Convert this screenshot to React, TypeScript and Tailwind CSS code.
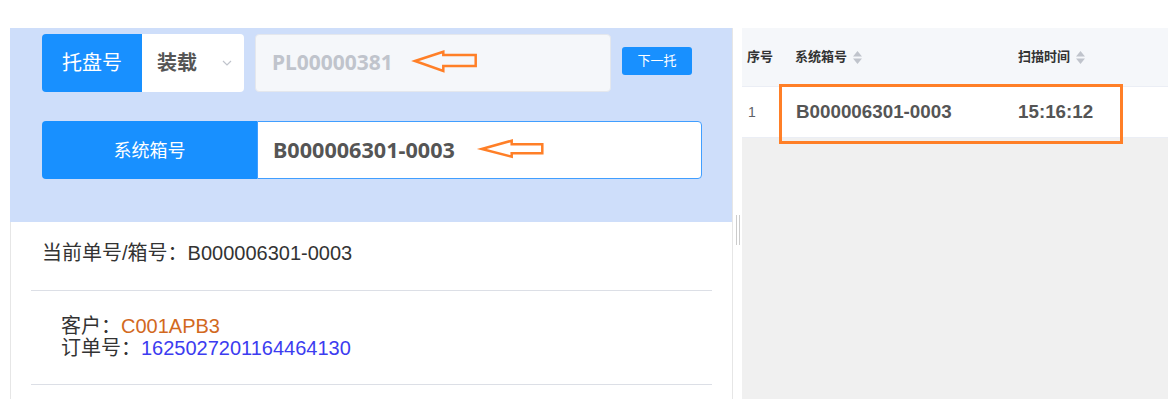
import React from "react";

const cjk = "font-['Noto_Sans','Noto_Sans_CJK_SC',sans-serif]";
const arial = "font-['Liberation_Sans','Noto_Sans_CJK_SC',sans-serif]";

function SortIcon() {
  return (
    <svg width="11" height="15" viewBox="0 0 11 15" className="ml-[5px]">
      <path d="M5.5 1 L10 6.5 L1 6.5 Z" fill="#c0c4cc" />
      <path d="M5.5 14 L10 8.5 L1 8.5 Z" fill="#c0c4cc" />
    </svg>
  );
}

export default function App() {
  return (
    <div className={`w-[1168px] h-[399px] bg-white overflow-hidden ${cjk}`}>
      <div className="h-[28px]" />
      <div className="flex h-[371px]">
        <div className="w-[10px] shrink-0" />
        {/* Left panel */}
        <div className="w-[723px] shrink-0 flex flex-col border-r border-[#e6e6e6]">
          <div className="relative h-[194px] bg-[#cedefa] pl-[32px] pt-[6px]">
            {/* Row 1 */}
            <div className="flex h-[58px]">
              <div className="w-[100px] h-full bg-[#1890ff] rounded-l-[4px] flex items-center justify-center text-white text-[20px]">
                托盘号
              </div>
              <div className="w-[102px] h-full bg-white rounded-r-[4px] flex items-center pl-[15px] pr-[12px] justify-between">
                <span className="text-[20px] font-bold text-[#555]">装载</span>
                <svg width="10" height="6" viewBox="0 0 10 6">
                  <path d="M1 1 L5 5 L9 1" fill="none" stroke="#c0c4cc" strokeWidth="1.2" />
                </svg>
              </div>
              <div className="ml-[11px] w-[356px] h-full bg-[#f5f7fa] border border-[#e4e7ed] rounded-[4px] flex items-center pl-[16px]">
                <span className="text-[21px] font-bold text-[#c0c4cc]">PL00000381</span>
              </div>
              <div className="ml-[11px] mt-[13px] w-[70px] h-[28px] bg-[#1890ff] rounded-[3px] flex items-center justify-center text-white text-[13px]">
                下一托
              </div>
            </div>
            {/* Row 2 */}
            <div className="flex h-[58px] mt-[29px]">
              <div className="w-[215px] h-full bg-[#1890ff] rounded-l-[4px] flex items-center justify-center text-white text-[18px]">
                系统箱号
              </div>
              <div className="w-[445px] h-full bg-white border border-[#409eff] rounded-r-[4px] flex items-center pl-[15px]">
                <span className="text-[21.6px] font-bold text-[#555]">B000006301-0003</span>
              </div>
            </div>
            {/* annotation arrows */}
            <svg className="absolute left-0 top-0 pointer-events-none" width="723" height="194">
              <polygon
                points="405,33 433.3,23.7 433.3,27 465.7,27 465.7,38 433.3,38 433.3,43"
                fill="none"
                stroke="#ff7f27"
                strokeWidth="2.5"
              />
              <polygon
                points="471.7,121 501.7,112.7 501.7,116.3 532.3,116.3 532.3,125.3 501.7,125.3 501.7,128.7"
                fill="none"
                stroke="#ff7f27"
                strokeWidth="2.5"
              />
            </svg>
          </div>
          <div className={`flex-1 bg-white border-l border-[#e6e6e6] ${arial} text-[20px] leading-[22px]`}>
            <div className="pl-[31px] pt-[20px] text-[#333]">当前单号/箱号：B000006301-0003</div>
            <div className="ml-[20px] mr-[20px] mt-[26px] border-t border-[#dcdfe6]" />
            <div className="pl-[50px] pt-[24px] text-[#333]">
              <div>
                客户：<span className="text-[#d2691e]">C001APB3</span>
              </div>
              <div>
                订单号：<span className="text-[#3c3cf0]">1625027201164464130</span>
              </div>
            </div>
            <div className="ml-[20px] mr-[20px] mt-[25px] border-t border-[#dcdfe6]" />
          </div>
        </div>
        {/* splitter */}
        <div className="w-[9px] shrink-0 bg-white flex justify-center pt-[187px]">
          <div className="flex gap-[2px] h-[30px]">
            <div className="w-px h-full bg-[#cccccc]" />
            <div className="w-px h-full bg-[#cccccc]" />
          </div>
        </div>
        {/* Right panel */}
        <div className="relative w-[426px] shrink-0 flex flex-col bg-[#f0f0f0]">
          <div className="h-[59px] bg-[#f5f7fa] border-b border-[#ebeef5] flex items-center text-[13px] font-bold text-[#333]">
            <div className="w-[45px] pl-[5px]">序号</div>
            <div className="w-[223px] pl-[8px] flex items-center">
              系统箱号
              <SortIcon />
            </div>
            <div className="flex-1 pl-[8px] flex items-center">
              扫描时间
              <SortIcon />
            </div>
          </div>
          <div className={`h-[51px] bg-white border-b border-[#ebeef5] flex items-center ${arial}`}>
            <div className="w-[45px] pl-[6px] text-[14px] text-[#606266]">1</div>
            <div className="w-[223px] pl-[9px] text-[18.8px] font-bold text-[#555]">B000006301-0003</div>
            <div className="flex-1 pl-[8px] text-[18.8px] font-bold text-[#555]">15:16:12</div>
          </div>
          <div className="flex-1" />
          <div className="absolute left-[37px] top-[56px] w-[344px] h-[60px] border-[3px] border-[#ff7f27] pointer-events-none" />
        </div>
      </div>
    </div>
  );
}
